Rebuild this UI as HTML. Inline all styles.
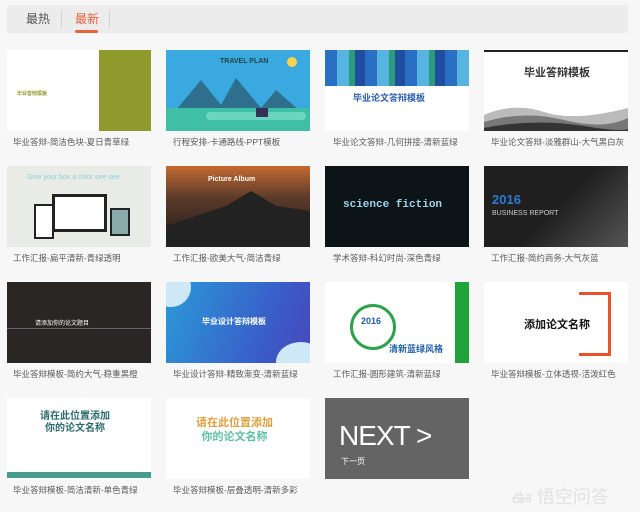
<!DOCTYPE html>
<html><head><meta charset="utf-8"><style>
*{margin:0;padding:0;box-sizing:border-box}
body{width:640px;height:510px;background:#f7f7f7;position:relative;overflow:hidden;font-family:"Liberation Sans","Noto Sans CJK SC",sans-serif}
.bar{position:absolute;left:7px;top:5px;width:621px;height:28px;background:#ececec}
.tab{position:absolute;top:10px;font-size:12px}
.sep{position:absolute;top:10px;width:1px;height:18px;background:#d4d4d4}
.t{position:absolute;width:144px;height:81px;overflow:hidden}
.c{position:absolute;font-size:8.5px;color:#5a5a5a;white-space:nowrap}
.ab{position:absolute}
</style></head><body>
<div class="bar"></div>
<div class="tab" style="left:26px;color:#555">最热</div>
<div class="sep" style="left:61px"></div>
<div class="tab" style="left:75px;color:#e8623a">最新</div>
<div style="position:absolute;left:75px;top:30px;width:23px;height:3px;background:#e8623a;border-radius:2px"></div>
<div class="sep" style="left:109px"></div>

<!-- row1 -->
<div class="t" style="left:7px;top:50px;background:#fff">
 <div class="ab" style="left:92px;top:0;width:52px;height:81px;background:#8f9a2c"></div>
 <div class="ab" style="left:10px;top:40px;font-size:5px;color:#8f9a2c;font-weight:bold">毕业答辩模板</div>
</div>
<div class="t" style="left:166px;top:50px;background:#3aa9e0">
 <div class="ab" style="left:54px;top:8px;font-size:7px;color:#244;font-weight:bold">TRAVEL PLAN</div>
 <div class="ab" style="left:121px;top:7px;width:10px;height:10px;border-radius:50%;background:#f7d44a"></div>
 <svg class="ab" style="left:0;top:20px" width="144" height="61"><polygon points="10,40 35,10 55,35 70,8 95,38 110,20 135,42 144,50 0,50" fill="#2e6f8e"/><rect x="0" y="38" width="144" height="23" fill="#3fbfa5"/><rect x="40" y="42" width="100" height="8" rx="4" fill="#6bd6c0"/><rect x="90" y="38" width="12" height="9" fill="#335"/></svg>
</div>
<div class="t" style="left:325px;top:50px;background:#fff">
 <div class="ab" style="left:0;top:0;width:144px;height:36px;background:repeating-linear-gradient(90deg,#2a6fc4 0 12px,#57b3e0 12px 24px,#2d9a7a 24px 30px,#1f4ea0 30px 40px)"></div>
 <div class="ab" style="left:28px;top:41px;font-size:9px;color:#2a5cb0;font-weight:bold">毕业论文答辩模板</div>
</div>
<div class="t" style="left:484px;top:50px;background:#fff;border-top:2px solid #222">
 <div class="ab" style="left:40px;top:12px;font-size:11px;color:#333;font-weight:bold">毕业答辩模板</div>
 <svg class="ab" style="left:0;top:48px" width="144" height="33"><path d="M0 15 Q30 2 60 12 T144 8 V33 H0Z" fill="#bbb"/><path d="M0 22 Q40 10 80 20 T144 18 V33 H0Z" fill="#777"/><path d="M0 28 Q50 18 100 26 T144 26 V33 H0Z" fill="#333"/></svg>
</div>
<div class="c" style="left:13px;top:136px">毕业答辩-简洁色块-夏日青草绿</div>
<div class="c" style="left:173px;top:136px">行程安排-卡通路线-PPT模板</div>
<div class="c" style="left:333px;top:136px">毕业论文答辩-几何拼接-清新蓝绿</div>
<div class="c" style="left:491px;top:136px">毕业论文答辩-淡雅群山-大气黑白灰</div>

<!-- row2 -->
<div class="t" style="left:7px;top:166px;background:#e9ebe6">
 <div class="ab" style="left:20px;top:8px;font-size:7px;color:#8ccfd6">Give your box a color see see</div>
 <div class="ab" style="left:45px;top:28px;width:55px;height:38px;background:#fff;border:3px solid #222"></div>
 <div class="ab" style="left:27px;top:38px;width:20px;height:35px;background:#fff;border:2px solid #222"></div>
 <div class="ab" style="left:103px;top:42px;width:20px;height:28px;background:#8aa;border:2px solid #222"></div>
</div>
<div class="t" style="left:166px;top:166px;background:linear-gradient(#c46a30,#5a3a2a 40%,#1c1a1a)">
 <svg class="ab" style="left:0;top:0" width="144" height="81"><path d="M0 60 L60 40 L85 25 L110 40 L144 45 V81 H0Z" fill="#222"/></svg>
 <div class="ab" style="left:42px;top:10px;font-size:7px;color:#fff;font-weight:bold">Picture Album</div>
</div>
<div class="t" style="left:325px;top:166px;background:#0d1418">
 <div class="ab" style="left:18px;top:33px;font-size:11px;color:#9fd3e8;font-family:'Liberation Mono',monospace;font-weight:bold">science fiction</div>
</div>
<div class="t" style="left:484px;top:166px;background:linear-gradient(135deg,#1f1f1f 50%,#555)">
 <div class="ab" style="left:8px;top:26px;font-size:13px;color:#2e7ad6;font-weight:bold">2016</div>
 <div class="ab" style="left:8px;top:44px;font-size:7px;color:#ccc">BUSINESS REPORT</div>
</div>
<div class="c" style="left:13px;top:252px">工作汇报-扁平清新-青绿透明</div>
<div class="c" style="left:173px;top:252px">工作汇报-欧美大气-简洁青绿</div>
<div class="c" style="left:333px;top:252px">学术答辩-科幻时尚-深色青绿</div>
<div class="c" style="left:491px;top:252px">工作汇报-简约商务-大气灰蓝</div>

<!-- row3 -->
<div class="t" style="left:7px;top:282px;background:#2a2624">
 <div class="ab" style="left:28px;top:36px;font-size:6px;color:#fff">请添加你的论文题目</div>
 <div class="ab" style="left:0;top:46px;width:144px;height:1px;background:#666"></div>
</div>
<div class="t" style="left:166px;top:282px;background:linear-gradient(110deg,#2a9ad8,#3a5cc8 70%,#4848b8)">
 <div class="ab" style="left:-15px;top:-15px;width:40px;height:40px;border-radius:50%;background:#cfe8f8"></div>
 <div class="ab" style="left:110px;top:60px;width:50px;height:40px;border-radius:50%;background:#cfe8f8"></div>
 <div class="ab" style="left:36px;top:34px;font-size:8px;color:#fff;font-weight:bold">毕业设计答辩模板</div>
</div>
<div class="t" style="left:325px;top:282px;background:#fff">
 <div class="ab" style="left:130px;top:0;width:14px;height:81px;background:#1fa33a"></div>
 <div class="ab" style="left:25px;top:22px;width:46px;height:46px;border-radius:50%;border:3px solid #2ca34a"></div>
 <div class="ab" style="left:36px;top:34px;font-size:9px;color:#1e5ca8;font-weight:bold">2016</div>
 <div class="ab" style="left:64px;top:60px;font-size:9px;color:#1e5ca8;font-weight:bold">清新蓝绿风格</div>
</div>
<div class="t" style="left:484px;top:282px;background:#fff">
 <div class="ab" style="left:95px;top:10px;width:32px;height:64px;border:3px solid #e8532c;border-left:none"></div>
 <div class="ab" style="left:40px;top:34px;font-size:11px;color:#111;font-weight:bold">添加论文名称</div>
</div>
<div class="c" style="left:13px;top:368px">毕业答辩模板-简约大气-稳重黑橙</div>
<div class="c" style="left:173px;top:368px">毕业设计答辩-精致渐变-清新蓝绿</div>
<div class="c" style="left:333px;top:368px">工作汇报-圆形建筑-清新蓝绿</div>
<div class="c" style="left:491px;top:368px">毕业答辩模板-立体透视-活泼红色</div>

<!-- row4 -->
<div class="t" style="left:7px;top:398px;background:#fff">
 <div class="ab" style="left:33px;top:13px;font-size:10px;color:#2a6a6a;font-weight:bold;line-height:12px;text-align:center">请在此位置添加<br>你的论文名称</div>
 <div class="ab" style="left:0;top:74px;width:144px;height:6px;background:#4a9a90"></div>
</div>
<div class="t" style="left:166px;top:398px;background:#fff">
 <div class="ab" style="left:30px;top:18px;font-size:11px;color:#e0a040;font-weight:bold;line-height:14px;text-align:center">请在此位置添加<br><span style="color:#5cc0a0">你的论文名称</span></div>
</div>
<div class="t" style="left:325px;top:398px;background:#646464">
 <div class="ab" style="left:14px;top:22px;font-size:28px;color:#fff;letter-spacing:-1px">NEXT &gt;</div>
 <div class="ab" style="left:16px;top:58px;font-size:8px;color:#fff">下一页</div>
</div>
<div class="c" style="left:13px;top:484px">毕业答辩模板-简洁清新-单色青绿</div>
<div class="c" style="left:173px;top:484px">毕业答辩模板-层叠透明-清新多彩</div>
<div class="ab" style="left:512px;top:483px;font-size:18px;color:#e2e2e2;white-space:nowrap">ఊ 悟空问答</div>
</body></html>
